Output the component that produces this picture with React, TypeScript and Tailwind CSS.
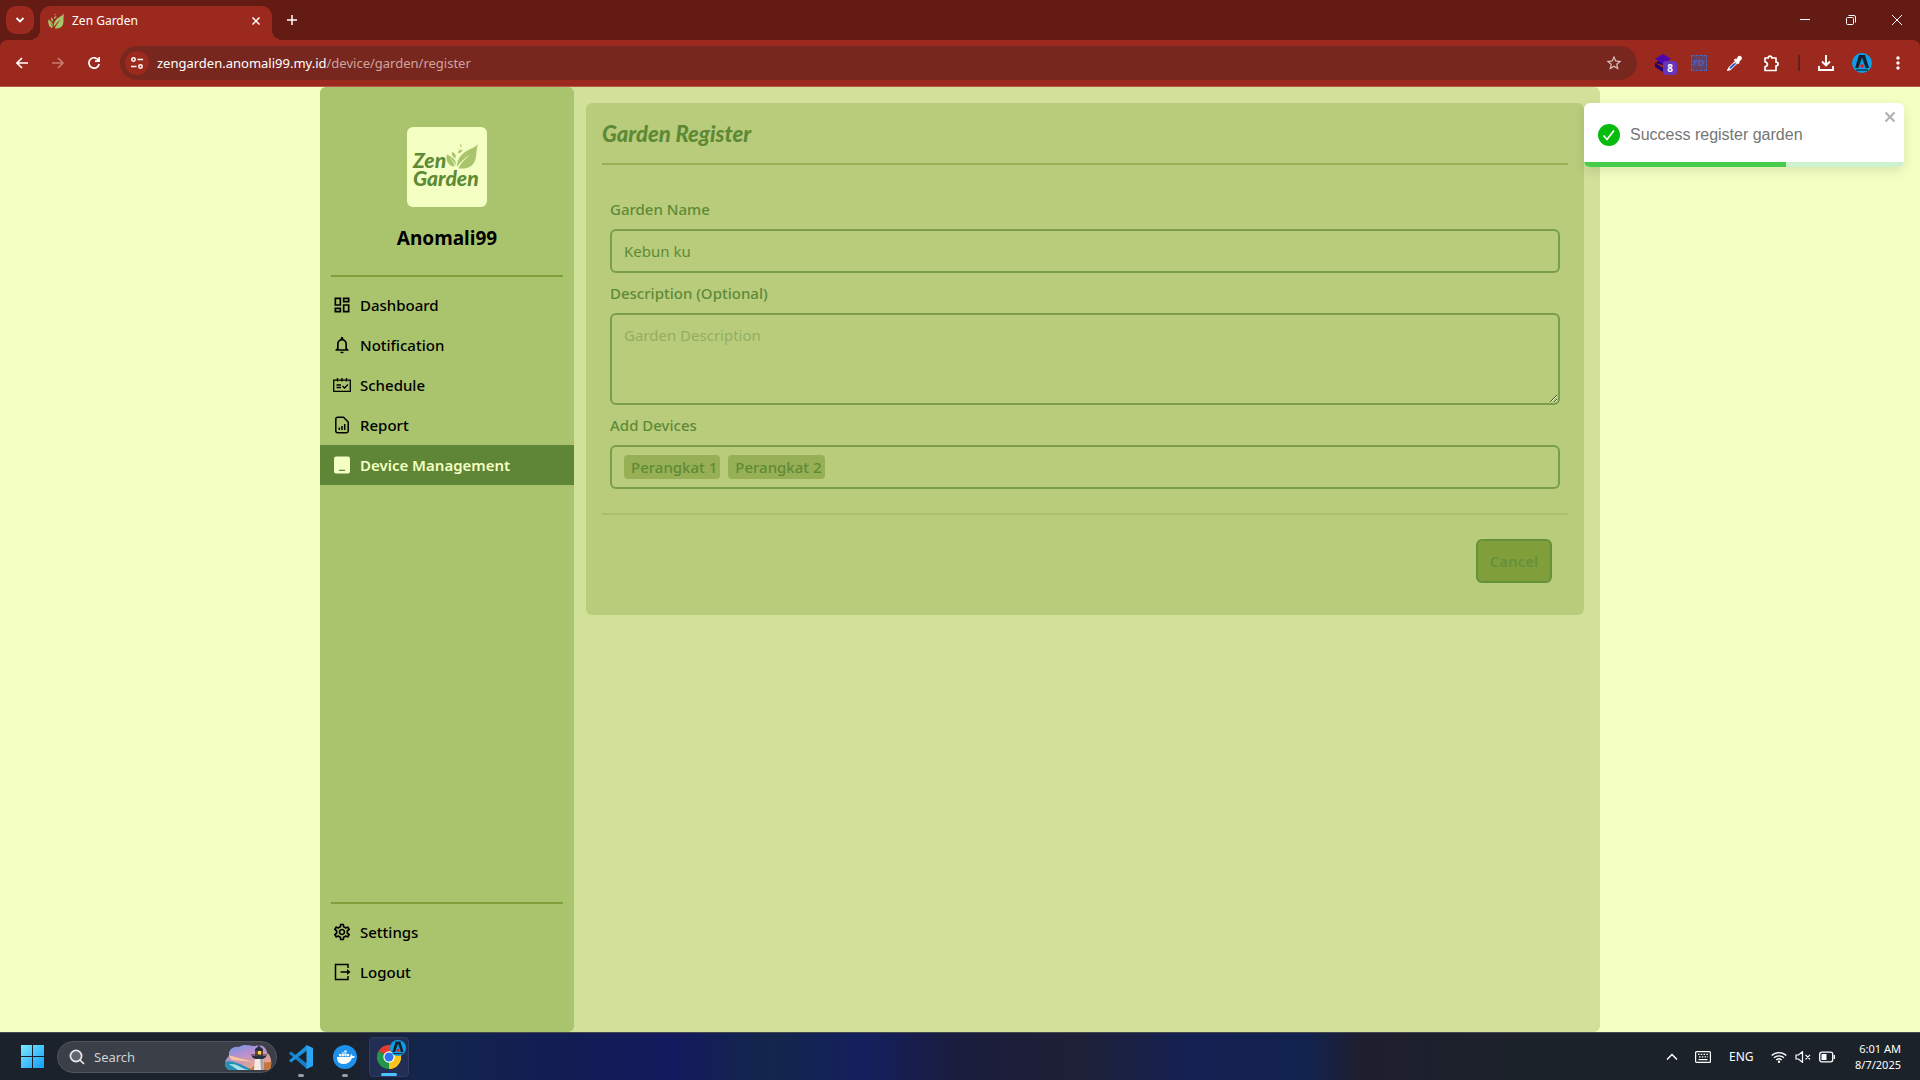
import React from 'react';
import { MdOutlineDashboard, MdOutlineSettings, MdNotificationsNone, MdStarOutline, MdMoreVert } from 'react-icons/md';

function Leaf({ className }: { className: string }) {
  return (
    <svg viewBox="0 0 96 76" className={className} fill="currentColor" aria-hidden="true">
      <path d="M96 0C90 12 62 16 46 34c-10 11-14 24-13 36C44 54 56 42 74 32 58 44 46 56 37 74c20 3 38-2 47-16C94 42 90 22 96 0Z" />
      <path d="M2 32c-4 18 4 34 24 37-2-12-8-20-16-27 10 6 15 13 18 23C33 48 18 40 2 32Z" />
      <path d="M18 24c-3 9 3 16 10 19 4-7-1-16-10-19ZM50 17c-8 0-14 4-15 11 8 0 14-4 15-11ZM44 0c-3 4-2 8 1 10 3-4 2-7-1-10ZM40 12l-5 4 4 1Z" />
    </svg>
  );
}

function AvatarA({ className }: { className: string }) {
  return (
    <svg viewBox="0 0 20 20" className={className} aria-hidden="true">
      <circle cx="10" cy="10" r="10" fill="#0c9fe8" />
      <path d="M3 15 7 2h6l4 13h-3.400L10 4.500 6.400 15Z" fill="#16202c" />
      <circle cx="10" cy="13" r="1.800" fill="#f01414" />
      <path d="M4 17h12" stroke="#16202c" strokeWidth="1.200" />
    </svg>
  );
}

function BrowserTabs() {
  return (
    <div className="flex h-10 items-start bg-[#641b14] text-white">
      <button aria-label="Search tabs" className="ml-1.5 mt-1.5 flex size-7 items-center justify-center rounded-[10px] bg-[#9c291d]">
        <svg viewBox="0 0 10 10" className="size-2.5" fill="none" stroke="currentColor" strokeWidth="1.800"><path d="m1.500 3 3.500 3.500L8.500 3" /></svg>
      </button>
      <div className="relative ml-1.5 mt-1.5 flex h-[34px] w-[232px] items-center rounded-t-[10px] bg-[#9c291d] pl-2">
        <span className="absolute -left-2.5 bottom-0 size-2.5 bg-[radial-gradient(circle_at_0_0,#641b14_10px,#9c291d_10px)]" />
        <span className="absolute -right-2.5 bottom-0 size-2.5 bg-[radial-gradient(circle_at_100%_0,#641b14_10px,#9c291d_10px)]" />
        <svg viewBox="0 0 16 16" className="mb-1 size-4 text-[#a8c46c]" fill="currentColor" aria-hidden="true">
          <path d="M16 0c-1 3-6 4-8.500 7.500C6 9.500 5.500 12 5.800 14 8 10.500 10 8.500 13 6.500 10.500 9 8 12 6.800 15.500c4 .5 7-1 8.200-4C16 8.500 15 4 16 0Z" />
          <path d="M.3 6.500C0 11 1 14.500 4.600 15c-.3-2.500-1.300-4-2.800-5.500C3.500 10.500 4.500 12 5 13.500 5.500 10 3 8 .3 6.500ZM3 4.500c-.4 2 .5 3.200 2 4 .6-1.600-.4-3.200-2-4ZM8.500 3.200c-1.500 0-2.500.8-2.700 2.300 1.500 0 2.500-.8 2.700-2.300ZM7 .5c-.6.8-.4 1.500.2 2 .6-.8.4-1.500-.2-2Z" />
        </svg>
        <span className="mb-1 ml-2 grow text-[12px] leading-4">Zen Garden</span>
        <button aria-label="Close tab" className="mb-1 mr-3">
          <svg viewBox="0 0 8 8" className="size-2" fill="none" stroke="currentColor" strokeWidth="1.500"><path d="m.5.5 7 7m0-7-7 7" /></svg>
        </button>
      </div>
      <button aria-label="New tab" className="ml-[15px] mt-[15px]">
        <svg viewBox="0 0 10 10" className="size-2.5" fill="none" stroke="currentColor" strokeWidth="1.500"><path d="M5 0v10M0 5h10" /></svg>
      </button>
      <div className="ml-auto flex h-10 items-center">
        <button aria-label="Minimize" className="flex w-[46px] justify-center"><svg viewBox="0 0 10 10" className="size-2.5" stroke="currentColor"><path d="M0 4.500h10" /></svg></button>
        <button aria-label="Restore" className="flex w-[46px] justify-center"><svg viewBox="0 0 10 10" className="size-2.5" fill="none" stroke="currentColor"><rect x=".5" y="2.500" width="7" height="7" rx="1" /><path d="M2.500.5H8A1.500 1.500 0 0 1 9.500 2v5.500" /></svg></button>
        <button aria-label="Close window" className="flex w-[46px] justify-center"><svg viewBox="0 0 10 10" className="size-2.5" fill="none" stroke="currentColor"><path d="m0 0 10 10M10 0 0 10" /></svg></button>
      </div>
    </div>
  );
}

function BrowserToolbar() {
  return (
    <div className="bg-[#641b14]">
      <div className="flex h-[47px] items-center rounded-t-[7px] border-b border-[#b5574a] bg-[#9c291d] text-white">
        <button aria-label="Back" className="ml-4">
          <svg viewBox="0 0 12 12" className="size-3" fill="none" stroke="currentColor" strokeWidth="1.600"><path d="M12 6H1m5-5L1 6l5 5" /></svg>
        </button>
        <button aria-label="Forward" className="ml-6 text-[#c67a71]">
          <svg viewBox="0 0 12 12" className="size-3" fill="none" stroke="currentColor" strokeWidth="1.600"><path d="M0 6h11M6 1l5 5-5 5" /></svg>
        </button>
        <button aria-label="Reload" className="ml-6">
          <svg viewBox="0 0 12 12" className="size-3" fill="none" stroke="currentColor" strokeWidth="1.700"><path d="M10.500 3.200A5.200 5.200 0 1 0 11.200 7M11.200 0v4.200H7" /></svg>
        </button>
        <div className="ml-5 flex h-[34px] grow items-center rounded-full bg-[#78271f] pl-[5px] pr-[14px]">
          <button aria-label="Site information" className="flex size-6 items-center justify-center rounded-full bg-[#9c291d]">
            <svg viewBox="0 0 12 12" className="size-3" fill="none" stroke="currentColor" strokeWidth="1.500"><circle cx="2.500" cy="2.500" r="1.700" /><path d="M6.500 2.500H12M0 9.500h5.500" /><circle cx="9.500" cy="9.500" r="1.700" /></svg>
          </button>
          <p className="ml-2 grow text-[13px] leading-5 text-[#d0a49f]"><span className="text-white">zengarden.anomali99.my.id</span>/device/garden/register</p>
          <button aria-label="Bookmark"><MdStarOutline className="size-[18px] text-[#dcc0bd]" /></button>
        </div>
        <div className="ml-[18px] flex items-center">
          <button aria-label="Layers extension" className="relative">
            <svg viewBox="0 0 22 22" className="size-[22px]"><path d="m0 11 8-4 8 4-7 5H8l-8-5v4l8 5h4v-6Z" fill="#240070" /><path d="m8 2 8 5-8 5-8-5Z" fill="#4c06b0" /></svg>
            <span className="absolute left-2 top-[9px] flex h-3.5 w-3.5 items-center justify-center rounded-[3px] bg-[#6735b8] text-[10px] font-bold leading-3">8</span>
          </button>
          <button aria-label="FD extension" className="ml-[14px] flex size-4 items-center justify-center border border-dashed border-[#3f68c8] bg-[#68405e] text-[9px] font-semibold leading-3 text-[#3f68c8]">FD</button>
          <button aria-label="Color picker" className="ml-5">
            <svg viewBox="0 0 16 16" className="size-4"><path d="M11 1.500c2-2 5 1 3.500 3L12 7l.7.800-1.500 1.500L6.800 5l1.500-1.500 1 .8Z" fill="#fff" /><path d="m9 6-7 7-1 2 2-.5 7.500-7Z" fill="#9c291d" stroke="#fff" strokeWidth="1.500" /><path d="m2.500 12.500 4-4h3l-6 5.500Z" fill="#2754d0" /></svg>
          </button>
          <button aria-label="Extensions" className="ml-5">
            <svg viewBox="0 0 17 17" className="size-[17px]" fill="none" stroke="currentColor" strokeWidth="1.700" strokeLinejoin="round"><path d="M2 3h3.300C5.300.6 8.800.6 8.800 3H13v4.200c2.800 0 2.800 3.600 0 3.600V15.500H2v-3.700c3.200-.6 3.200-4.400 0-5Z" /></svg>
          </button>
          <span className="ml-[18px] h-4 w-0.5 bg-[#64201a]" />
          <button aria-label="Downloads" className="ml-[18px]">
            <svg viewBox="0 0 16 16" className="size-4" fill="none" stroke="currentColor" strokeWidth="1.900"><path d="M8 0v10M4 6.500l4 4 4-4M1 11v4h14v-4" /></svg>
          </button>
          <button aria-label="Profile" className="ml-[18px]"><AvatarA className="size-5" /></button>
          <button aria-label="Browser menu" className="ml-4 mr-3"><MdMoreVert className="size-5" /></button>
        </div>
      </div>
    </div>
  );
}

const ScheduleIcon = () => (
  <svg viewBox="0 0 18 18" className="size-[18px]" fill="none" stroke="currentColor" strokeWidth="1.300"><path d="M.7 4.200h16.600v11.200H.7ZM4.500 2v3.500M9 2v3.500M13.500 2v3.500M3.500 9H8M3.500 11.500H8M9.500 10l2 2 3.500-3.500" /></svg>
);
const ReportIcon = () => (
  <svg viewBox="0 0 18 18" className="size-[18px]" fill="none" stroke="currentColor" strokeWidth="1.500"><path d="M4.500 1.200h6L15.200 6v9a1.700 1.700 0 0 1-1.700 1.700h-9A1.700 1.700 0 0 1 2.800 15V2.900a1.700 1.700 0 0 1 1.700-1.700ZM6.300 11.500V14M9 10v4M11.700 8v6" /></svg>
);
const DeviceIcon = () => (
  <svg viewBox="0 0 18 18" className="size-[18px]" fill="currentColor"><path fillRule="evenodd" d="M3 .5h12A2 2 0 0 1 17 2.500v13a2 2 0 0 1-2 2H3a2 2 0 0 1-2-2v-13a2 2 0 0 1 2-2Zm3 13.200V15h6v-1.300Z" /></svg>
);
const LogoutIcon = () => (
  <svg viewBox="0 0 18 18" className="size-[18px]" fill="none" stroke="currentColor" strokeWidth="1.500"><path d="M15 5V1.500H2.500v15H15V13M7.500 9H16" /><path d="m14 6 3.500 3-3.500 3Z" fill="currentColor" stroke="none" /></svg>
);

function NavItem({ label, icon, active = false }: { label: string; icon: React.ReactNode; active?: boolean }) {
  return (
    <a href="#" aria-current={active ? 'page' : undefined} className={active ? 'flex h-10 items-center gap-2 bg-[#5e8636] pl-3 font-semibold text-[#f4ffc3]' : 'flex h-10 items-center gap-2 pl-3 font-medium text-black'}>
      <span className="flex w-5 justify-center">{icon}</span>
      <span className="text-[15px] leading-6">{label}</span>
    </a>
  );
}

function Sidebar() {
  return (
    <aside className="flex w-[254px] shrink-0 flex-col rounded-md bg-[#a9c46c] pb-10 pt-10">
      <div className="mx-auto flex size-20 flex-col justify-center rounded-md bg-[#f4ffc3] pl-1.5 pt-1 font-['Lato'] text-[21px] font-black italic text-[#5e8a36]">
        <div className="flex h-[18px] items-center leading-[18px]">
          <span>Zen</span>
          <Leaf className="mb-2 h-[25px] w-8 text-[#a9c46c]" />
        </div>
        <span className="leading-[18px]">Garden</span>
      </div>
      <h2 className="mt-4 text-center text-[19px] font-bold leading-[30px]">Anomali99</h2>
      <hr className="mx-[11px] mb-2 mt-[22px] border-t-2 border-[#809f3b]" />
      <nav aria-label="Main">
        <NavItem label="Dashboard" icon={<MdOutlineDashboard className="size-5" />} />
        <NavItem label="Notification" icon={<MdNotificationsNone className="size-5" />} />
        <NavItem label="Schedule" icon={<ScheduleIcon />} />
        <NavItem label="Report" icon={<ReportIcon />} />
        <NavItem label="Device Management" icon={<DeviceIcon />} active />
      </nav>
      <hr className="mx-[11px] mb-2 mt-auto border-t-2 border-[#809f3b]" />
      <nav aria-label="Account">
        <NavItem label="Settings" icon={<MdOutlineSettings className="size-5" />} />
        <NavItem label="Logout" icon={<LogoutIcon />} />
      </nav>
    </aside>
  );
}

function RegisterForm() {
  return (
    <form className="ml-3 mr-4 mt-4 grow self-start rounded-md bg-[#b8cc7c] px-4 pb-8 pt-4 text-[15px] leading-6 text-[#5e8a36]">
      <h1 className="mb-3.5 font-['Lato'] text-[22px] font-black italic leading-[30px]">Garden Register</h1>
      <hr className="border-t-2 border-[#98b055]" />
      <div className="flex flex-col gap-2 px-2 pb-6 pt-8">
        <label htmlFor="name" className="font-medium">Garden Name</label>
        <input id="name" type="text" defaultValue="Kebun ku" className="h-11 rounded-md border-2 border-[#7a9e4c] bg-transparent px-3" />
        <label htmlFor="description" className="font-medium">Description (Optional)</label>
        <textarea id="description" placeholder="Garden Description" className="block h-[92px] rounded-md border-2 border-[#7a9e4c] bg-transparent px-3 py-2 placeholder:text-[#94ae60]" />
        <span id="devices" className="font-medium">Add Devices</span>
        <div role="group" aria-labelledby="devices" className="flex h-11 items-center gap-2 rounded-md border-2 border-[#7a9e4c] px-3 font-medium">
          <button type="button" className="h-6 rounded bg-[#98b055] pl-[7px] pr-[3px]">Perangkat 1</button>
          <button type="button" className="h-6 rounded bg-[#98b055] pl-[7px] pr-[3px]">Perangkat 2</button>
        </div>
      </div>
      <hr className="border-t-2 border-[#a9bf6a]" />
      <div className="flex justify-end pr-4 pt-6">
        <button type="button" className="h-11 w-[76px] rounded-md border-2 border-[#66903a] bg-[#809f3b] font-semibold text-[#66903a]">Cancel</button>
      </div>
    </form>
  );
}

function Toast() {
  return (
    <div role="alert" className="absolute right-4 top-4 flex h-16 w-80 items-center overflow-hidden rounded-md bg-white pl-3.5 font-['Liberation_Sans',sans-serif] text-[16px] leading-6 text-[#757575] shadow-[0_4px_12px_rgba(0,0,0,0.1)]">
      <svg viewBox="0 0 22 22" className="size-[22px]"><circle cx="11" cy="11" r="11" fill="#07bc0c" /><path d="m5.500 11.500 3.500 4 7-9" fill="none" stroke="#fff" strokeWidth="1.700" /></svg>
      <span className="ml-2.5">Success register garden</span>
      <button aria-label="Close notification" className="absolute right-2 top-2 text-[#b3b3b3]">
        <svg viewBox="0 0 12 12" className="size-3" stroke="currentColor" strokeWidth="2.200"><path d="m1.500 1.500 9 9m0-9-9 9" /></svg>
      </button>
      <div className="absolute inset-x-0 bottom-0 h-[5px] bg-[#cdf2ce]"><div className="h-full w-[63%] bg-[#45cc48]" /></div>
    </div>
  );
}

function Taskbar() {
  return (
    <footer className="flex h-12 items-center border-t border-[#44484f] bg-[linear-gradient(90deg,#1c222c_0%,#1c222c_18%,#13254c_22%,#121c54_30%,#141a5e_35%,#13264a_40%,#141f5e_45%,#1a1d3c_50%,#1e2036_56%,#142052_62%,#12224e_68%,#1e1f2e_71%,#1c222a_79%)] text-white">
      <button aria-label="Start" className="ml-[21px]">
        <svg viewBox="0 0 23 23" className="size-[23px]"><defs><linearGradient id="win" x2="1" y2="1"><stop stopColor="#7be8ff" /><stop offset="1" stopColor="#129dfa" /></linearGradient></defs><path d="M0 0h11v11H0ZM12 0h11v11H12ZM0 12h11v11H0ZM12 12h11v11H12Z" fill="url(#win)" /></svg>
      </button>
      <div className="ml-[13px] flex h-8 w-[220px] items-center overflow-hidden rounded-full border border-[#50545c] bg-[#3a3f48] pl-[11px] pr-1">
        <svg viewBox="0 0 16 16" className="size-4 shrink-0" fill="none" stroke="#e8e8e8" strokeWidth="1.700"><circle cx="7" cy="7" r="5.600" fill="#61656d" /><path d="m11 11 4 4" /></svg>
        <input aria-label="Search" placeholder="Search" className="ml-[9px] w-0 grow bg-transparent text-[13px] leading-5 placeholder:text-[#cfd1d4]" />
        <svg viewBox="0 0 48 26" className="h-[26px] w-12 shrink-0" aria-hidden="true">
          <defs>
            <linearGradient id="sky" y2="1" x2=".6"><stop stopColor="#5b9bea" /><stop offset=".45" stopColor="#b58fd0" /><stop offset="1" stopColor="#f4a982" /></linearGradient>
            <clipPath id="cloud"><path d="M5 12C4 6 9 2 15 3c5-4 12-1 16-1 8-3 12 3 12 7 6 3 5 17 1 17H6C0 25-1 17 5 12Z" /></clipPath>
          </defs>
          <g clipPath="url(#cloud)">
            <path d="M0 0h48v26H0Z" fill="url(#sky)" />
            <path d="m4 11 22 6 4 1-22-2Z" fill="#f9c69a" />
            <path d="M0 18c10-3 18 4 30 8H0Z" fill="#2691b5" />
            <path d="M5 20c9-1 12 5 20 6H14Z" fill="#a6e0e8" />
            <path d="M26 26c4-7 14-8 22-8v8Z" fill="#c5763f" />
          </g>
          <path d="m31 13-1 13h10l-1-13Z" fill="#f5e9e0" /><path d="M36 13h3l1 13h-3Z" fill="#a6a2b0" />
          <path d="M28 12h14v1l-3 2h-8l-3-2ZM31 5l4-3 4 3v2h-8Z" fill="#28303f" />
          <path d="M31 7h8v5h-8Z" fill="#6b4a34" /><path d="M34 7h3v4h-3Z" fill="#ffd35c" /><path d="M35 0v3M27 11h16" stroke="#28303f" />
        </svg>
      </div>
      <button aria-label="Visual Studio Code" className="relative ml-3">
        <svg viewBox="0 0 24 24" className="size-6"><path d="M0 8.500 2 6.500l16 12V24Z" fill="#167fc8" /><path d="M0 15.500 2 17.500l16-12V0Z" fill="#1b90dd" /><path d="m17.500 0 6.500 3v18l-6.500 3Z" fill="#2aa6f0" /></svg>
        <span className="absolute -bottom-2 left-[9px] h-[3px] w-1.5 rounded-full bg-[#9a9da3]" />
      </button>
      <button aria-label="Docker" className="relative ml-5">
        <svg viewBox="0 0 24 24" className="size-6"><circle cx="12" cy="12" r="12" fill="#1d91ec" /><path d="M4 12h13c1-1 .5-2 1-3 1 .5 1.300 1.300 1.500 2 1-.2 2 0 2.500.500-.5 1.200-2 1.500-3 1.500-1.500 4-4.500 6-8.500 6S4 17 4 12Z" fill="#fff" /><path d="M6 9h2.200v2.200H6ZM8.700 9h2.200v2.200H8.700ZM11.400 9h2.200v2.200h-2.200ZM14 9h2.200v2.200H14ZM8.700 7.400h5V8.500h-5ZM11.400 5.500h2.200v1.400h-2.200Z" fill="#fff" /></svg>
        <span className="absolute -bottom-2 left-[9px] h-[3px] w-1.5 rounded-full bg-[#9a9da3]" />
      </button>
      <button aria-label="Google Chrome" className="relative ml-3 flex size-10 items-center justify-center rounded border border-[#303a62] bg-[#222e54]">
        <svg viewBox="0 0 24 24" className="size-6"><path d="M12 12 1.600 6A12 12 0 0 1 22.400 6Z" fill="#e33b2e" /><path d="M12 12 22.400 6A12 12 0 0 1 12 24Z" fill="#fcc31e" /><path d="M12 12 12 24A12 12 0 0 1 1.600 6Z" fill="#22974a" /><path d="M12 6.500h10.600a12 12 0 0 1-10.600 17.500l5-9.500Z" fill="#fcc31e" /><circle cx="12" cy="12" r="5.700" fill="#fff" /><circle cx="12" cy="12" r="4.500" fill="#2d74ec" /></svg>
        <AvatarA className="absolute right-0.5 top-0.5 size-4" />
        <span className="absolute bottom-0 left-[11px] h-[3px] w-4 rounded-full bg-[#4cc2ff]" />
      </button>
      <div className="ml-auto flex items-center pr-[19px] text-[12px] leading-4">
        <button aria-label="Show hidden icons"><svg viewBox="0 0 12 12" className="size-3" fill="none" stroke="currentColor" strokeWidth="1.500"><path d="m1 8.500 5-5 5 5" /></svg></button>
        <button aria-label="Touch keyboard" className="ml-[17px]"><svg viewBox="0 0 16 12" className="h-3 w-4" fill="none" stroke="currentColor" strokeWidth="1.200"><rect x=".6" y=".6" width="14.800" height="10.800" rx="1" /><path d="M3 3.300h10" strokeDasharray="1.500 1.300" /><path d="M4 5.800h9" strokeDasharray="1.500 1.300" /><path d="M3.500 8.600h9" /></svg></button>
        <button className="ml-[18px] w-6">ENG</button>
        <button aria-label="Network, volume and battery" className="ml-[18px] flex items-center gap-2">
          <svg viewBox="0 0 16 12" className="h-3 w-4" fill="none" stroke="currentColor" strokeWidth="1.300"><path d="M.7 4.500a10.500 10.500 0 0 1 14.600 0M3 6.800a7.200 7.200 0 0 1 10 0M5.300 9a4 4 0 0 1 5.400 0" /><circle cx="8" cy="10.800" r="1.200" fill="currentColor" stroke="none" /></svg>
          <svg viewBox="0 0 16 12" className="h-3 w-4" fill="none" stroke="currentColor" strokeWidth="1.200"><path d="M1 4h2.500l4-3.300v10.600L3.500 8H1Zm9.500-.2 4.500 4.500m0-4.500-4.500 4.500" /></svg>
          <svg viewBox="0 0 16 12" className="h-3 w-4" fill="none" stroke="currentColor" strokeWidth="1.300"><rect x=".7" y="1.200" width="13" height="9.600" rx="2" /><path d="M2.500 3h5v6h-5Z" fill="currentColor" stroke="none" /><path d="M15.300 4v4" /></svg>
        </button>
        <time className="ml-4 w-[50px] whitespace-nowrap text-right text-[11px]">6:01 AM<br />8/7/2025</time>
      </div>
    </footer>
  );
}

export default function App() {
  return (
    <div className="flex min-h-screen flex-col font-['Segoe_UI','Noto_Sans',sans-serif]">
      <BrowserTabs />
      <BrowserToolbar />
      <main className="relative flex grow bg-[#f4ffc3]">
        <div className="mx-auto flex w-full max-w-7xl rounded-md bg-[#d1e199]">
          <Sidebar />
          <RegisterForm />
        </div>
        <Toast />
      </main>
      <Taskbar />
    </div>
  );
}
